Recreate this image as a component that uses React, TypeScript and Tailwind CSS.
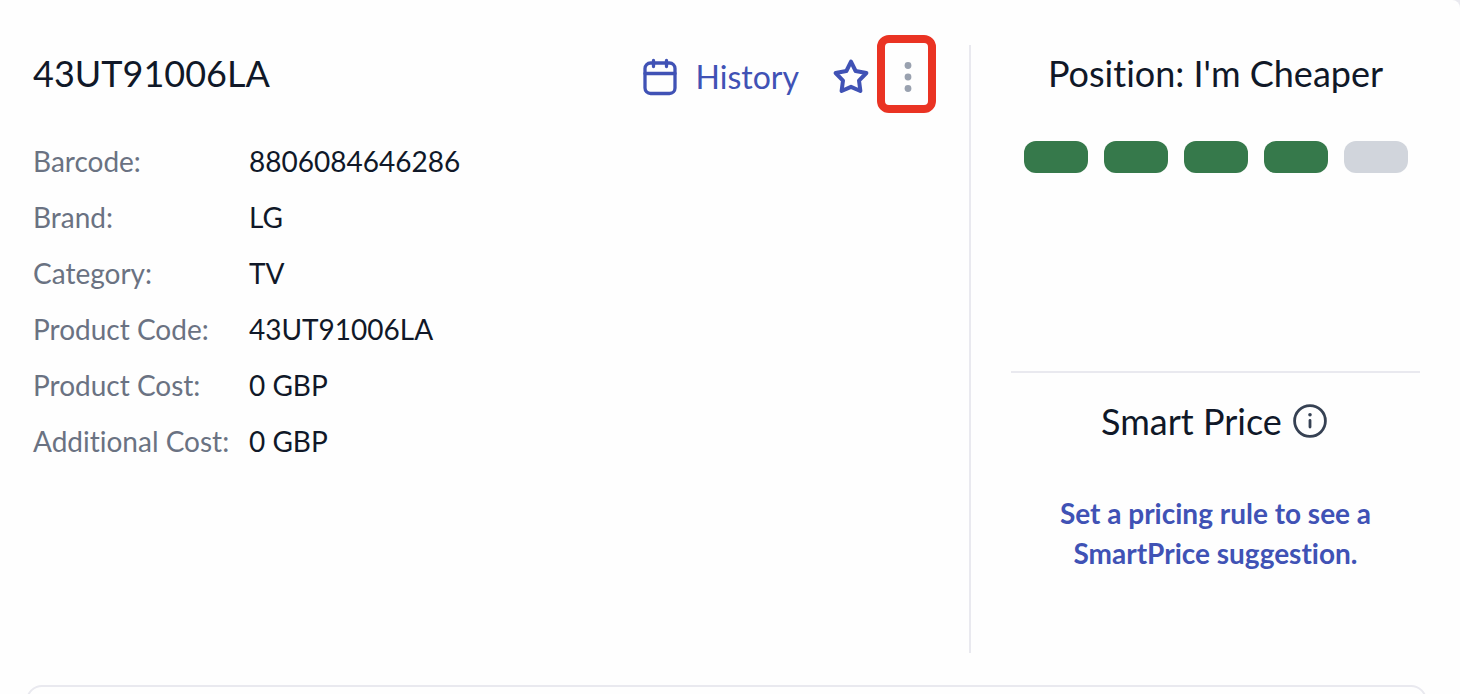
const details = [
  { label: "Barcode:", value: "8806084646286" },
  { label: "Brand:", value: "LG" },
  { label: "Category:", value: "TV" },
  { label: "Product Code:", value: "43UT91006LA" },
  { label: "Product Cost:", value: "0 GBP" },
  { label: "Additional Cost:", value: "0 GBP" },
];

const score = 4;

function CalendarIcon() {
  return (
    <svg
      className="w-10 h-10"
      viewBox="0 0 40 40"
      fill="none"
      stroke="currentColor"
      strokeWidth="3.3"
      strokeLinecap="round"
      aria-hidden="true"
    >
      <rect x="5" y="6" width="30" height="30.5" rx="5.5" />
      <path d="M5 16.5h30M13.5 3.5v6M26.5 3.5v6" />
    </svg>
  );
}

function StarIcon() {
  return (
    <svg
      className="w-10 h-10"
      viewBox="0 0 40 40"
      fill="none"
      stroke="currentColor"
      strokeWidth="4"
      strokeLinejoin="round"
      aria-hidden="true"
    >
      <path d="M20 4.6 24.6 14 35.4 16 28 23.6 29.4 34 20 29.8 10.6 34 12 23.6 4.6 16 15.4 14Z" />
    </svg>
  );
}

function DotsIcon() {
  return (
    <svg className="w-10 h-10" viewBox="0 0 40 40" fill="currentColor" aria-hidden="true">
      <circle cx="20" cy="8.5" r="3.4" />
      <circle cx="20" cy="20" r="3.4" />
      <circle cx="20" cy="31.5" r="3.4" />
    </svg>
  );
}

function InfoIcon() {
  return (
    <svg
      className="w-10 h-10"
      viewBox="0 0 40 40"
      fill="none"
      stroke="currentColor"
      strokeWidth="2.8"
      strokeLinecap="round"
      aria-hidden="true"
    >
      <circle cx="20" cy="20" r="15.4" />
      <path d="M20 19.5v6.5" />
      <circle cx="20" cy="13.8" r="1.8" fill="currentColor" stroke="none" />
    </svg>
  );
}

function ProductInfo() {
  return (
    <section className="flex-1 pl-[33px] pr-8">
      <div className="flex items-start justify-between">
        <h1 className="text-4xl leading-[56px]">43UT91006LA</h1>
        <div className="flex items-center pt-2 text-[#4052b5]">
          <button className="flex items-center gap-4 h-12 text-[32px] leading-[48px]">
            <CalendarIcon />
            History
          </button>
          <button className="ml-8" aria-label="Add to favourites">
            <StarIcon />
          </button>
          <button
            className="relative flex items-center justify-center ml-2 w-[58px] h-12 text-gray-400"
            aria-label="More options"
          >
            <DotsIcon />
            <span className="absolute -top-[18px] -bottom-3 -left-0.5 right-px border-8 border-[#ea3323] rounded-xl"></span>
          </button>
        </div>
      </div>

      <dl className="mt-10 flex flex-col gap-4 text-[28px] leading-10">
        {details.map((item) => (
          <div key={item.label} className="flex">
            <dt className="w-[216px] text-gray-500">{item.label}</dt>
            <dd>{item.value}</dd>
          </div>
        ))}
      </dl>
    </section>
  );
}

function PricePanel() {
  return (
    <aside className="w-[491px] shrink-0 px-10 border-l-2 border-[#e9e9ef] text-center">
      <div className="h-[328px] border-b-2 border-[#e9e9ef]">
        <h2 className="text-4xl leading-[56px]">Position: I'm Cheaper</h2>
        <div className="mt-10 flex justify-center gap-4">
          {[1, 2, 3, 4, 5].map((step) => (
            <div
              key={step}
              className={`w-16 h-8 rounded-xl ${step <= score ? "bg-[#36794b]" : "bg-gray-300"}`}
            ></div>
          ))}
        </div>
      </div>

      <div className="mt-5 flex items-center justify-center gap-2">
        <h2 className="text-4xl leading-[56px]">Smart Price</h2>
        <button className="text-gray-700" aria-label="About Smart Price">
          <InfoIcon />
        </button>
      </div>
      <a
        href="#"
        className="mt-11 mx-auto block max-w-[340px] text-[28px] leading-10 font-bold text-[#4052b5]"
      >
        Set a pricing rule to see a SmartPrice suggestion.
      </a>
    </aside>
  );
}

function App() {
  return (
    <div className="h-screen overflow-hidden bg-[#e9e9ef] font-['Lato',sans-serif] [font-variant-ligatures:none] text-gray-900">
      <main className="min-h-full pt-[45px] bg-[#fefefe] rounded-tr-lg">
        <div className="flex min-h-[608px]">
          <ProductInfo />
          <PricePanel />
        </div>
        <div className="mt-8 ml-[26px] mr-[33px] h-24 border-2 border-[#e9e9ef] rounded-2xl"></div>
      </main>
    </div>
  );
}

export default App;
